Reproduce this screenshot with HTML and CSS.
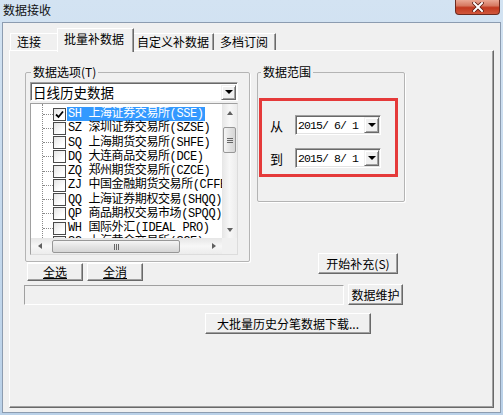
FILE: index.html
```html
<!DOCTYPE html>
<html lang="zh-CN">
<head>
    <meta charset="UTF-8">
    <title>数据接收</title>
    <link rel="stylesheet" href="styles.css">
</head>
<body>
    <div class="window">
        <div class="titlebar">
            <span class="title">数据接收</span>
            <span class="close">
                <svg width="12" height="10" viewBox="0 0 12 10">
                    <path d="M2 1 L10 9 M10 1 L2 9" stroke="#5a1a10" stroke-width="3.6" stroke-linecap="square"/>
                    <path d="M2 1 L10 9 M10 1 L2 9" stroke="#fff" stroke-width="2" stroke-linecap="square"/>
                </svg>
            </span>
        </div>
        <div class="client">
            <div class="tabs">
                <span class="tab t1">连接</span>
                <span class="tab active">批量补数据</span>
                <span class="tab t3">自定义补数据</span>
                <span class="tab t4">多档订阅</span>
            </div>
            <div class="panel">
                <div class="top">
                    <div class="left">
                        <fieldset class="group opts">
                            <legend>数据选项(T)</legend>
                            <div class="combo">
                                <span class="combo-text">日线历史数据</span>
                                <span class="drop"><i class="tri-down"></i></span>
                            </div>
                            <div class="list">
                                <div class="rows">
                                    <div class="tree">
                                        <div class="row"><span class="chk on"><svg width="11" height="11" viewBox="0 0 11 11"><path d="M2 5.5 L4.5 8 L9 2.5" fill="none" stroke="#000" stroke-width="1.8"/></svg></span><span class="txt sel">SH 上海证券交易所(SSE)</span></div>
                                        <div class="row"><span class="chk"></span><span class="txt">SZ 深圳证券交易所(SZSE)</span></div>
                                        <div class="row"><span class="chk"></span><span class="txt">SQ 上海期货交易所(SHFE)</span></div>
                                        <div class="row"><span class="chk"></span><span class="txt">DQ 大连商品交易所(DCE)</span></div>
                                        <div class="row"><span class="chk"></span><span class="txt">ZQ 郑州期货交易所(CZCE)</span></div>
                                        <div class="row"><span class="chk"></span><span class="txt">ZJ 中国金融期货交易所(CFFEX)</span></div>
                                        <div class="row"><span class="chk"></span><span class="txt">QQ 上海证券期权交易(SHQQ)</span></div>
                                        <div class="row"><span class="chk"></span><span class="txt">QP 商品期权交易市场(SPQQ)</span></div>
                                        <div class="row"><span class="chk"></span><span class="txt">WH 国际外汇(IDEAL PRO)</span></div>
                                        <div class="row"><span class="chk"></span><span class="txt">SG 上海黄金交易所(SGE)</span></div>
                                    </div>
                                </div>
                                <div class="vscroll">
                                    <span class="sbtn"><i class="tri-up"></i></span>
                                    <span class="vthumb"><i></i><i></i><i></i></span>
                                    <span class="sfill"></span>
                                    <span class="sbtn"><i class="tri-down small"></i></span>
                                </div>
                                <div class="hscroll">
                                    <span class="sbtn h"><i class="tri-left"></i></span>
                                    <span class="hthumb"><i></i><i></i><i></i></span>
                                    <span class="sfill"></span>
                                    <span class="sbtn h"><i class="tri-right"></i></span>
                                </div>
                                <div class="corner"></div>
                            </div>
                        </fieldset>
                        <div class="selrow">
                            <button class="btn small-btn"><u>全选</u></button>
                            <button class="btn small-btn"><u>全消</u></button>
                        </div>
                    </div>
                    <div class="right">
                        <fieldset class="group range">
                            <legend>数据范围</legend>
                            <div class="mark">
                                <div class="drow">
                                    <span class="dlabel">从</span>
                                    <div class="date">
                                        <span class="date-text">2015/ 6/ 1</span>
                                        <span class="drop"><i class="tri-down"></i></span>
                                    </div>
                                </div>
                                <div class="drow">
                                    <span class="dlabel">到</span>
                                    <div class="date">
                                        <span class="date-text">2015/ 8/ 1</span>
                                        <span class="drop"><i class="tri-down"></i></span>
                                    </div>
                                </div>
                            </div>
                        </fieldset>
                        <button class="btn start">开始补充(S)</button>
                    </div>
                </div>
                <div class="maint">
                    <div class="progress"></div>
                    <button class="btn maint-btn">数据维护</button>
                </div>
                <button class="btn bulk">大批量历史分笔数据下载...</button>
            </div>
        </div>
    </div>
</body>
</html>
```

FILE: styles.css
```css
body {
    margin: 0;
    font-family: "Noto Sans CJK SC", sans-serif;
    font-size: 12px;
    color: #000;
}
.window {
    width: 503px;
    height: 415px;
    display: flex;
    flex-direction: column;
    background: linear-gradient(180deg, #d3e3f2 0%, #c6daee 50%, #bad1e8 100%);
}
.titlebar {
    height: 22px;
    display: flex;
    align-items: flex-start;
}
.title {
    padding: 3px 0 0 3px;
    line-height: 14px;
    color: #111;
}
.close {
    margin-left: auto;
    margin-right: 3px;
    width: 45px;
    height: 15px;
    box-sizing: border-box;
    border: 1px solid #6d2a1e;
    border-top: none;
    border-radius: 0 0 4px 4px;
    background: linear-gradient(180deg, #eaa894 0%, #d77a62 40%, #c2391f 55%, #d0573c 100%);
    display: flex;
    align-items: center;
    justify-content: center;
}
.client {
    flex: 1;
    margin: 0 2px 2px;
    border: 1px solid #8c9cb0;
    background: #f0f0f0;
    padding: 5px 6px 4px;
    display: flex;
    flex-direction: column;
}
.tabs {
    height: 22px;
    display: flex;
    align-items: flex-end;
    padding-left: 1px;
    position: relative;
    z-index: 1;
}
.tab {
    box-sizing: border-box;
    height: 17px;
    line-height: 15px;
    padding-left: 6px;
    background: #f0f0f0;
    border-top: 1px solid #fff;
    border-left: 1px solid #fff;
    border-right: 1px solid #696969;
    box-shadow: inset -1px 0 #a0a0a0;
    white-space: nowrap;
}
.t1 { width: 47px; border-right: none; box-shadow: none; }
.active {
    width: 77px;
    height: 24px;
    margin-bottom: -2px;
    line-height: 19px;
}
.t3 { width: 80px; padding-left: 3px; border-left: none; }
.t4 { width: 62px; border-left: none; }
.panel {
    flex: 1;
    border: 1px solid;
    border-color: #fff #696969 #696969 #fff;
    box-shadow: inset -1px -1px #a0a0a0;
    padding: 15px 0 0 15px;
}
.top {
    display: flex;
    align-items: flex-start;
}
.left { width: 225px; }
.right {
    width: 148px;
    margin-left: 7px;
    display: flex;
    flex-direction: column;
}
.group {
    margin: 0;
    min-width: 0;
    border: 1px solid #b4b4b4;
    border-radius: 2px;
    box-shadow: 1px 1px 0 #fff;
}
.group legend {
    padding: 0 2px;
    line-height: 12px;
    font-size: 12px;
}
.opts {
    padding: 4px 11px 6px 4px;
}
.opts legend { margin-left: 1px; }
.combo {
    box-sizing: border-box;
    width: 208px;
    height: 19px;
    border: 1px solid;
    border-color: #a0a0a0 #fff #fff #a0a0a0;
    box-shadow: inset 1px 1px #696969;
    background: #fff;
    display: flex;
    align-items: center;
    padding: 1px 1px 0 2px;
}
.combo-text {
    flex: 1;
    font-size: 13.5px;
    line-height: 16px;
}
.drop {
    box-sizing: border-box;
    width: 15px;
    height: 15px;
    background: #f0f0f0;
    border: 1px solid;
    border-color: #f0f0f0 #696969 #696969 #f0f0f0;
    box-shadow: inset 1px 1px #fff, inset -1px -1px #a0a0a0;
    display: flex;
    align-items: center;
    justify-content: center;
}
.tri-down {
    width: 0;
    height: 0;
    border-left: 4px solid transparent;
    border-right: 4px solid transparent;
    border-top: 4px solid #000;
}
.tri-down.small { border-top-color: #606060; border-left-width: 3.5px; border-right-width: 3.5px; }
.tri-up {
    width: 0;
    height: 0;
    border-left: 3.5px solid transparent;
    border-right: 3.5px solid transparent;
    border-bottom: 4px solid #606060;
}
.tri-left {
    width: 0;
    height: 0;
    border-top: 3.5px solid transparent;
    border-bottom: 3.5px solid transparent;
    border-right: 4px solid #606060;
}
.tri-right {
    width: 0;
    height: 0;
    border-top: 3.5px solid transparent;
    border-bottom: 3.5px solid transparent;
    border-left: 4px solid #606060;
}
.list {
    box-sizing: border-box;
    width: 208px;
    height: 152px;
    margin-top: 2px;
    border: 1px solid;
    border-color: #a0a0a0 #dcdcdc #dcdcdc #a0a0a0;
    background: #fff;
    display: grid;
    grid-template-columns: 191px 15px;
    grid-template-rows: 134px 16px;
}
.rows {
    overflow: hidden;
}
.tree {
    margin-left: 11px;
    padding-top: 3px;
    border-left: 1px dotted #8a8a8a;
    min-height: 131px;
}
.row {
    height: 14.25px;
    display: flex;
    align-items: center;
    white-space: nowrap;
    font-family: "Liberation Mono", "Noto Sans CJK SC", monospace;
    letter-spacing: -0.4px;
}
.row::before {
    content: "";
    flex: none;
    width: 10px;
    border-top: 1px dotted #8a8a8a;
}
.chk {
    box-sizing: border-box;
    flex: none;
    width: 13px;
    height: 13px;
    border: 1px solid #4a4a4a;
    background: linear-gradient(135deg, #e4e4e4, #fff 70%);
    display: flex;
    align-items: center;
    justify-content: center;
}
.txt {
    flex: none;
    margin-left: 1px;
    padding: 0 1px;
    line-height: 14px;
}
.sel {
    background: #3399ff;
    color: #fff;
}
.vscroll {
    display: flex;
    flex-direction: column;
    background: linear-gradient(90deg, #e6e6e6, #f7f7f7 50%, #ececec);
}
.hscroll {
    display: flex;
    background: linear-gradient(180deg, #e6e6e6, #f7f7f7 50%, #ececec);
}
.corner { background: #f0f0f0; }
.sbtn {
    flex: none;
    height: 17px;
    display: flex;
    align-items: center;
    justify-content: center;
}
.sbtn.h { width: 17px; height: auto; }
.sfill { flex: 1; }
.vthumb {
    box-sizing: border-box;
    margin: 6px 1px 0;
    height: 26px;
    border: 1px solid #979797;
    border-radius: 2px;
    background: linear-gradient(90deg, #f5f5f5, #e2e2e2 55%, #d6d6d6);
    display: flex;
    flex-direction: column;
    align-items: center;
    justify-content: center;
    gap: 1px;
}
.vthumb i {
    width: 6px;
    height: 1px;
    background: #666;
}
.hthumb {
    box-sizing: border-box;
    margin: 2px 0 1px 4px;
    width: 128px;
    border: 1px solid #979797;
    border-radius: 2px;
    background: linear-gradient(180deg, #f5f5f5, #e2e2e2 55%, #d6d6d6);
    display: flex;
    align-items: center;
    justify-content: center;
    gap: 1px;
}
.hthumb i {
    width: 1px;
    height: 6px;
    background: #666;
}
.btn {
    box-sizing: border-box;
    font-family: "Noto Sans CJK SC", sans-serif;
    font-size: 12px;
    line-height: 14px;
    padding: 0;
    background: #f0f0f0;
    border: 1px solid;
    border-color: #fff #696969 #696969 #fff;
    box-shadow: inset -1px -1px #a0a0a0;
    color: #000;
}
.selrow {
    display: flex;
    gap: 4px;
    margin: 1px 0 0 2px;
}
.small-btn {
    width: 56px;
    height: 18px;
}
.range {
    padding: 20px 6px 24px 1px;
}
.range legend { margin-left: 2px; }
.mark {
    border: 3px solid #e53a3a;
    padding: 14px 0 6px 8px;
    display: flex;
    flex-direction: column;
    gap: 13px;
}
.drow {
    display: flex;
    align-items: center;
    height: 20px;
}
.dlabel {
    width: 13px;
    margin-right: 12px;
    font-size: 13px;
}
.date {
    box-sizing: border-box;
    width: 86px;
    height: 20px;
    border: 1px solid;
    border-color: #a0a0a0 #fff #fff #a0a0a0;
    box-shadow: inset 1px 1px #696969, inset -1px -1px #e3e3e3;
    background: #fff;
    display: flex;
    align-items: center;
    padding: 1px 1px 1px 2px;
}
.date-text {
    flex: 1;
    font-family: "Liberation Mono", monospace;
    font-size: 11.5px;
    letter-spacing: -0.9px;
    white-space: pre;
}
.date .drop { height: 16px; }
.start {
    width: 80px;
    height: 21px;
    margin: 51px 0 0 61px;
}
.maint {
    display: flex;
    align-items: center;
    margin: 3px 0 0 -1px;
}
.progress {
    box-sizing: border-box;
    width: 320px;
    height: 20px;
    border: 1px solid;
    border-color: #a0a0a0 #fff #fff #a0a0a0;
    background: #f0f0f0;
}
.maint-btn {
    width: 55px;
    height: 21px;
    margin-left: 4px;
}
.bulk {
    display: block;
    width: 166px;
    height: 21px;
    margin: 8px 0 0 180px;
}
```
